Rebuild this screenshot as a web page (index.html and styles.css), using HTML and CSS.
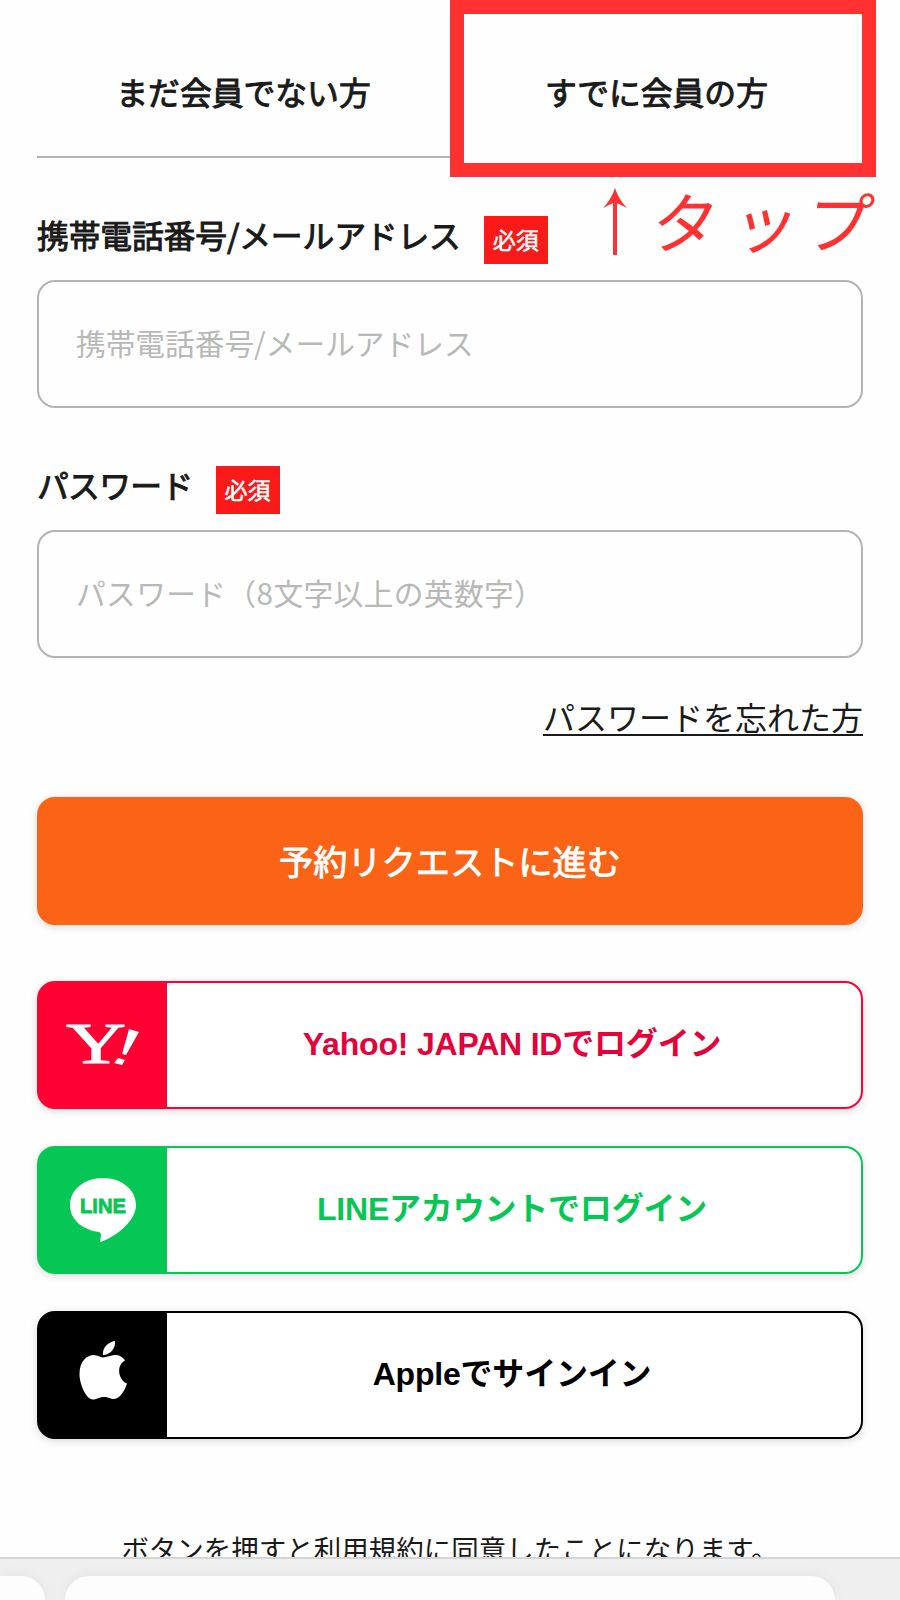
FILE: index.html
```html
<!DOCTYPE html>
<html lang="ja">
<head>
  <meta charset="UTF-8">
  <meta name="viewport" content="width=device-width, initial-scale=1">
  <title>ログイン</title>
  <link rel="stylesheet" href="styles.css">
</head>
<body>
  <main class="page">
    <nav class="tabs">
      <a class="tab">まだ会員でない方</a>
      <a class="tab tab-active">すでに会員の方</a>
    </nav>
    <div class="tap-frame"></div>
    <div class="tap-note">
      <svg class="tap-arrow" width="26" height="68" viewBox="0 0 26 68">
        <path d="M13 0 Q17 12 25 20 L15 15 V67 H11 V15 L1 20 Q9 12 13 0 Z" fill="#ff3131"/>
      </svg>
      <span class="tap-char">タ</span><span class="tap-char tap-small">ッ</span><span class="tap-char">プ</span>
    </div>

    <form class="login-form">
      <div class="field">
        <label class="field-label" for="account">携帯電話番号/メールアドレス <span class="required">必須</span></label>
        <input class="field-input" id="account" type="text" placeholder="携帯電話番号/メールアドレス">
      </div>
      <div class="field">
        <label class="field-label label-password" for="password">パスワード <span class="required">必須</span></label>
        <input class="field-input input-password" id="password" type="password" placeholder="パスワード（8文字以上の英数字）">
      </div>
      <a class="forgot">パスワードを忘れた方</a>
      <button class="submit" type="button">予約リクエストに進む</button>
    </form>

    <div class="social">
      <a class="social-btn yahoo">
        <span class="social-icon">
          <svg width="128" height="124" viewBox="0 0 128 124">
            <text x="27" y="80" fill="#fff" stroke="#fff" stroke-width="1" font-family="Liberation Serif, serif" font-size="56" textLength="60" lengthAdjust="spacingAndGlyphs">Y</text>
            <path d="M90 46 L100 49 L87 72 L83 71 Z M79 75 L86 77 L83 82 L75 80 Z" fill="#fff"/>
          </svg>
        </span>
        <span class="social-text">Yahoo! JAPAN IDでログイン</span>
      </a>
      <a class="social-btn line">
        <span class="social-icon">
          <svg width="128" height="124" viewBox="0 0 128 124">
            <path d="M64 30 C45 30 31 42 31 57 C31 72 44 82 60 84 C63 85 62 88 61 94 C70 92 97 76 97 57 C97 42 83 30 64 30 Z" fill="#fff"/>
            <text x="41" y="65" fill="#06c755" stroke="#06c755" stroke-width=".8" font-family="Liberation Sans, sans-serif" font-weight="bold" font-size="21" textLength="46" lengthAdjust="spacingAndGlyphs">LINE</text>
          </svg>
        </span>
        <span class="social-text">LINEアカウントでログイン</span>
      </a>
      <a class="social-btn apple">
        <span class="social-icon">
          <svg width="128" height="124" viewBox="0 0 128 124">
            <path d="M76 28 C77 35 71 42 64 42 C63 35 69 29 76 28 Z" fill="#fff"/>
            <path d="M64 44.500 C68 44.500 71 42 76 42 C80 42 84 44 86 47.500 C77 52 79 67 88 70.500 C86 77 81 86 75 86 C71 86 70 84 65 84 C60 84 58 86.500 54 86.500 C47 86.500 40.500 71 40.500 61 C40.500 48 48 42 55 42 C59 42 61 44.500 64 44.500 Z" fill="#fff"/>
          </svg>
        </span>
        <span class="social-text">Appleでサインイン</span>
      </a>
    </div>

    <p class="terms">ボタンを押すと利用規約に同意したことになります。</p>
  </main>

  <footer class="browser-bar">
    <div class="bar-card bar-prev"></div>
    <div class="bar-card bar-current"></div>
  </footer>
</body>
</html>
```
FILE: styles.css
```css
* {
  box-sizing: border-box;
}
body {
  margin: 0;
  height: 1600px;
  display: flex;
  flex-direction: column;
  overflow: hidden;
  background: #fefefe;
  color: #1a1a1a;
  font-family: "Liberation Sans", "Noto Sans CJK JP", sans-serif;
}
.page {
  position: relative;
  height: 1557px;
  padding: 0 37px;
  overflow: hidden;
}
.tabs {
  display: flex;
  height: 158px;
}
.tab {
  flex: 1;
  padding-top: 70px;
  border-bottom: 2px solid #b3b3b3;
  line-height: 48px;
  text-align: center;
  font-size: 31.8px;
  -webkit-text-stroke: 1px;
}
.tab-active {
  border-bottom-color: transparent;
}
.tap-frame {
  position: absolute;
  top: 0;
  left: 450px;
  width: 426px;
  height: 177px;
  border: 14px solid #ff3131;
}
.tap-note {
  position: absolute;
  top: 182px;
  left: 602px;
  display: flex;
  align-items: center;
  height: 80px;
  color: #ff3131;
  font-size: 66px;
  line-height: 80px;
}
.tap-arrow {
  margin-right: 24px;
}
.tap-char {
  width: 77px;
  transform: translateY(3px) skewX(-8deg);
}
.tap-small {
  transform: translate(4px, 3px) skewX(-8deg);
}
.login-form {
  display: flex;
  flex-direction: column;
}
.field {
  height: 250px;
  padding-top: 48px;
}
.field-label {
  display: flex;
  align-items: center;
  height: 56px;
  font-family: "Noto Sans CJK JP", sans-serif;
  font-size: 31.8px;
  letter-spacing: -0.15px;
  -webkit-text-stroke: 1px;
}
.label-password {
  letter-spacing: -0.7px;
}
.required {
  width: 64px;
  height: 48px;
  margin: 12px 0 0 23px;
  background: #fb1a1a;
  color: #fff;
  font-size: 23px;
  line-height: 46px;
  letter-spacing: 0;
  text-align: center;
  -webkit-text-stroke: 0.5px;
}
.field-input {
  display: block;
  width: 100%;
  height: 128px;
  margin-top: 18px;
  padding: 0 37px 4px;
  border: 2px solid #b3b3b3;
  border-radius: 18px;
  background: #fefefe;
  font-family: "Noto Sans CJK JP", sans-serif;
  font-size: 29.7px;
}
.input-password {
  letter-spacing: 0.4px;
}
.field-input::placeholder {
  color: #b8b8b8;
  opacity: 1;
}
.forgot {
  align-self: flex-end;
  margin-top: 37px;
  line-height: 48px;
  font-size: 32px;
  text-decoration: underline;
  text-decoration-thickness: 2px;
  text-underline-offset: 4px;
}
.submit {
  height: 128px;
  margin-top: 54px;
  padding-bottom: 4px;
  border: 0;
  border-radius: 18px;
  background: #fb6317;
  box-shadow: 0 2px 8px rgba(0, 0, 0, 0.15);
  color: #fff;
  font-family: inherit;
  font-size: 34.2px;
  -webkit-text-stroke: 0.9px;
}
.social {
  display: flex;
  flex-direction: column;
  gap: 37px;
  margin-top: 56px;
}
.social-btn {
  display: flex;
  height: 128px;
  border: 2px solid;
  border-radius: 18px;
  overflow: hidden;
  background: linear-gradient(to right, currentColor 100px, #fff 100px) border-box;
  box-shadow: 0 2px 8px rgba(0, 0, 0, 0.15);
}
.social-icon {
  width: 128px;
  background: currentColor;
}
.social-icon svg {
  display: block;
}
.social-text {
  flex: 1;
  padding-right: 4px;
  line-height: 122px;
  text-align: center;
  font-size: 32px;
  font-weight: bold;
  letter-spacing: -0.2px;
}
.yahoo {
  color: #ff0033;
}
.yahoo .social-text {
  color: #e6003a;
}
.line {
  color: #06c755;
}
.apple {
  color: #000;
}
.terms {
  margin: 91px 0 0;
  text-align: center;
  line-height: 42px;
  font-size: 27.5px;
  white-space: nowrap;
}
.browser-bar {
  display: flex;
  gap: 20px;
  height: 43px;
  padding-top: 17px;
  border-top: 2px solid #d5d5d5;
  background: #efefef;
}
.bar-card {
  background: #fdfdfd;
  box-shadow: 0 0 14px rgba(0, 0, 0, 0.06);
}
.bar-prev {
  width: 45px;
  border-radius: 0 26px 0 0;
}
.bar-current {
  width: 770px;
  border-radius: 26px 26px 0 0;
}
```
